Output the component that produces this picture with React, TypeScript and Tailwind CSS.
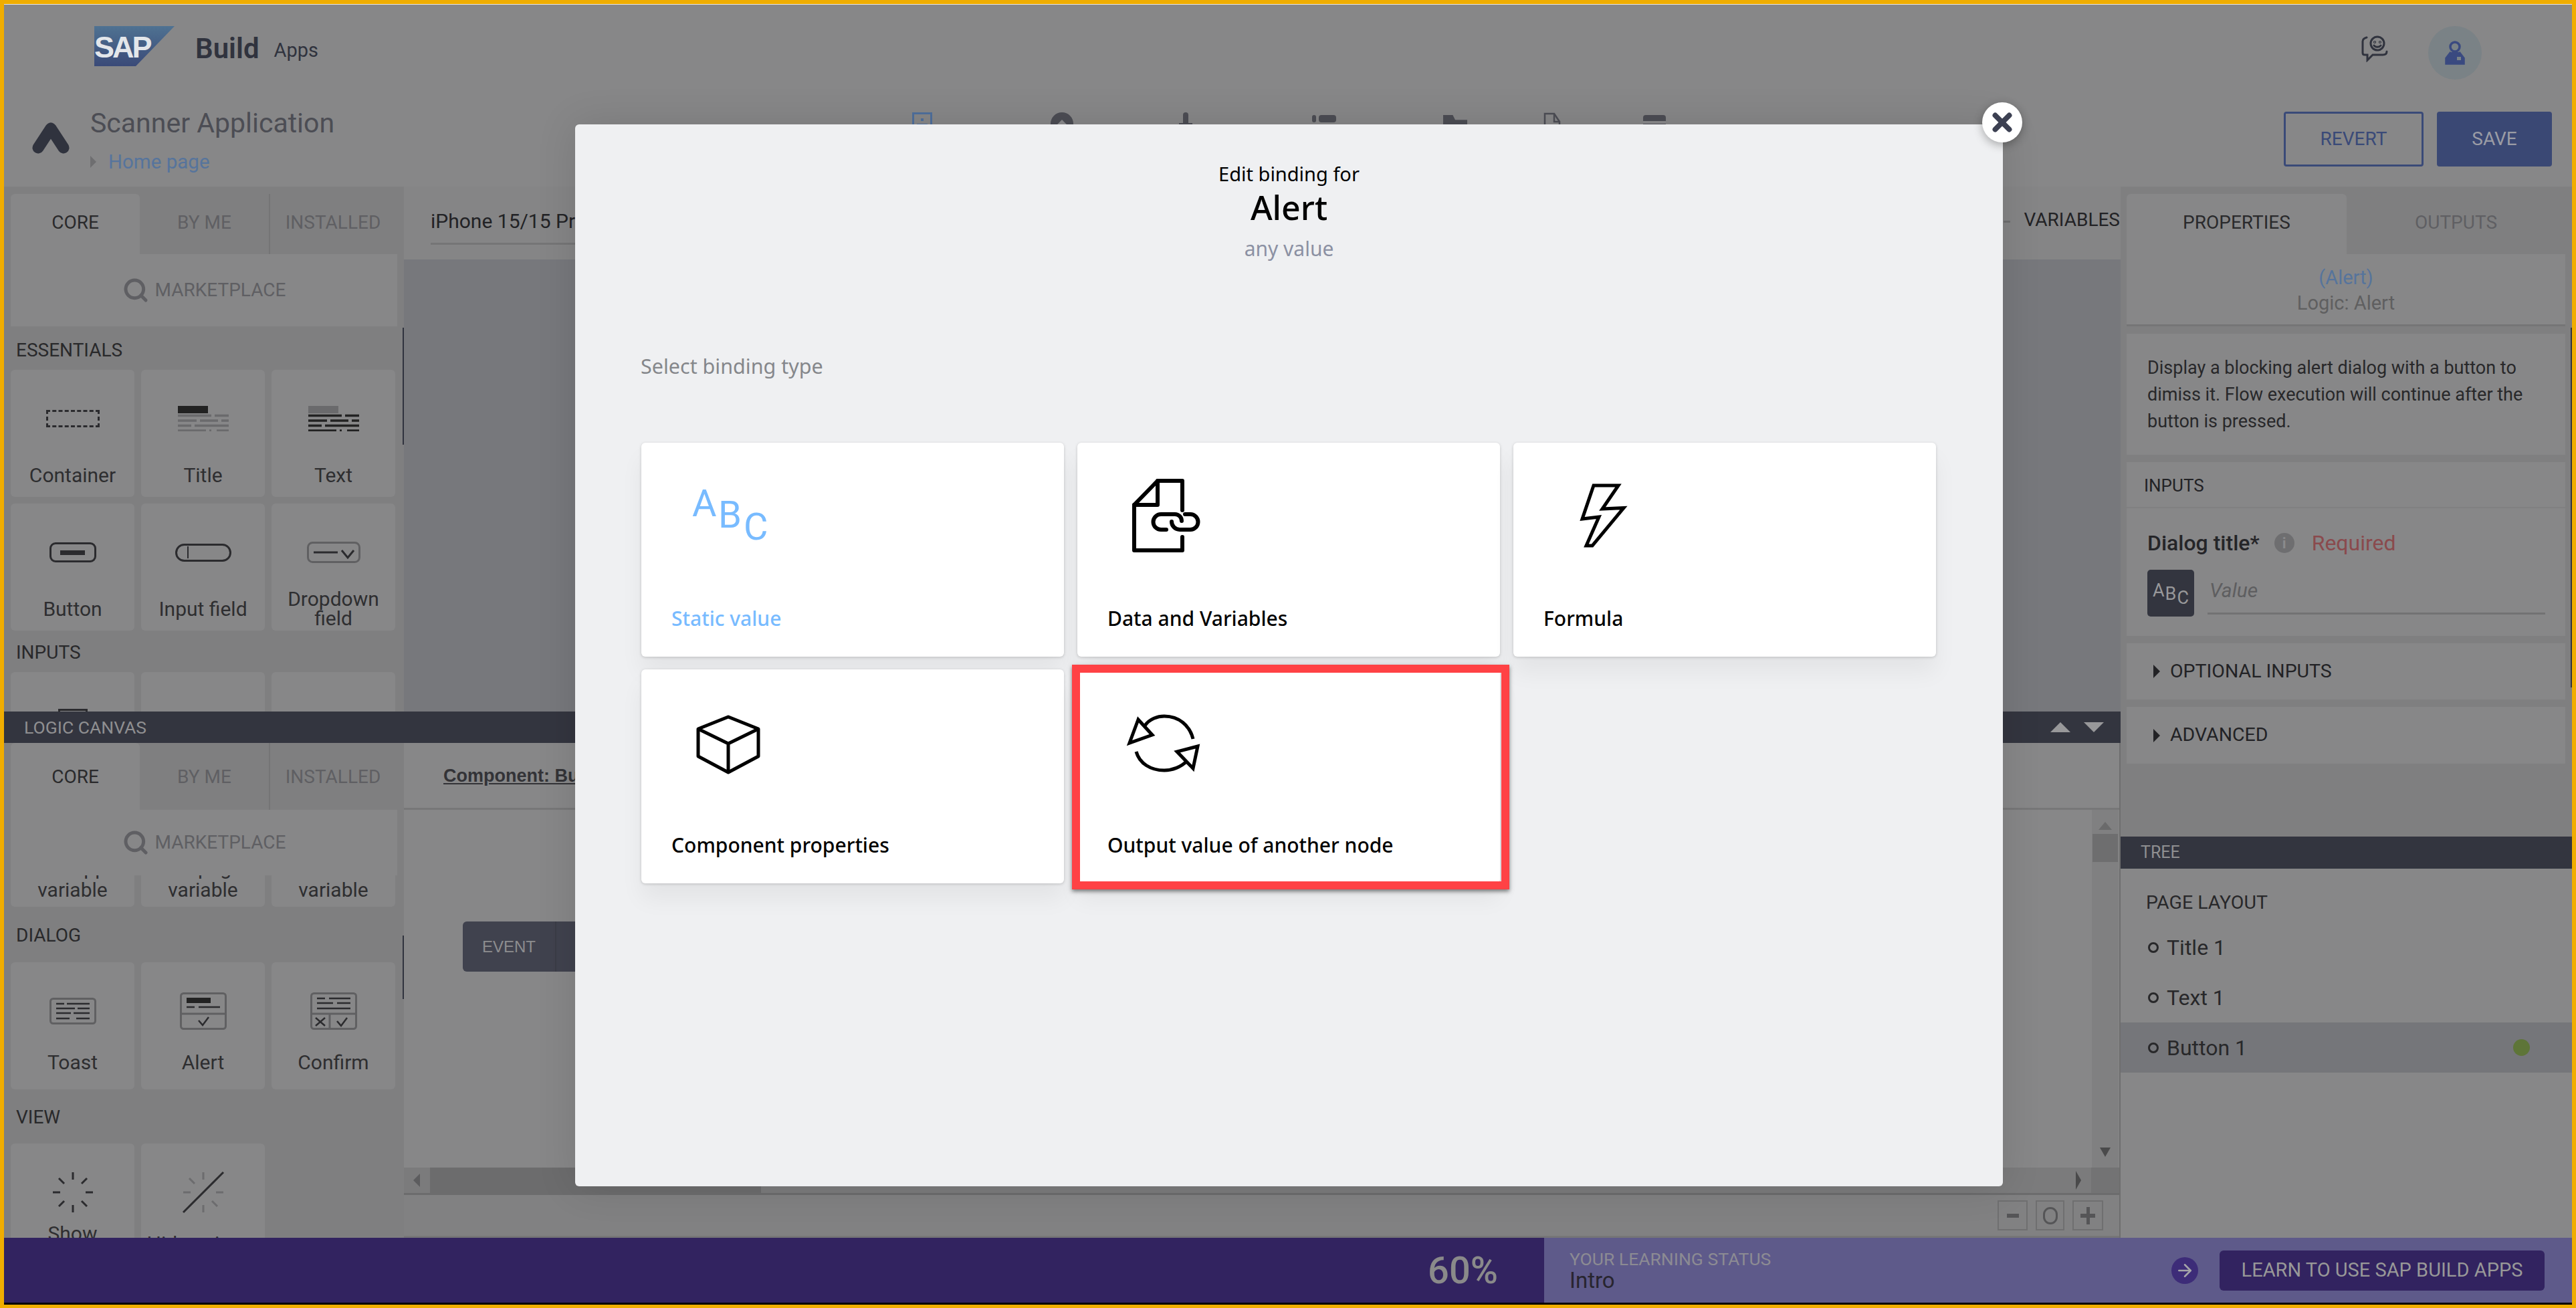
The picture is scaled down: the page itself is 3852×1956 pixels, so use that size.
import React from "react";
import { Search, X, ArrowRight } from "lucide-react";

const DocLinkIcon = () => (
  <svg viewBox="0 0 125 125" className="w-[125px] h-[125px]" fill="none" stroke="#000" strokeWidth="6" strokeLinejoin="round" strokeLinecap="round">
    <path d="M87 53V9H50L15 45V113H87V93" />
    <path d="M50 9V45H15" />
    <path d="M63 82H55A11.5 11.5 0 0 1 55 59H76A10 10 0 0 1 86 69" />
    <path d="M71 70A12 12 0 0 0 83 82H99A11.5 11.5 0 0 0 99 59H91" />
  </svg>
);

const BoltIcon = () => (
  <svg viewBox="0 0 125 125" className="w-[125px] h-[125px]" fill="none" stroke="#000" strokeWidth="5" strokeLinejoin="miter">
    <path d="M50 16H87L63 51L95 49.5L48 106H39L58 63L33 66Z" />
  </svg>
);

const CubeIcon = () => (
  <svg viewBox="0 0 125 125" className="w-[125px] h-[125px]" fill="none" stroke="#000" strokeWidth="5" strokeLinejoin="round">
    <path d="M60 23L105 41V82L60 106L15 82V41Z" />
    <path d="M15 41L60 63L105 41M60 63V106" />
  </svg>
);

const CycleIcon = () => (
  <svg viewBox="0 0 125 125" className="w-[125px] h-[125px]" fill="none" stroke="#000" strokeWidth="5" strokeLinejoin="miter">
    <path d="M31 36C38 26 50 22 60 22C82 22 98 36 103 56" />
    <path d="M18 75C23 93 40 103 60 103C72 103 85 98 94 89" />
    <path d="M21 27L8 62L42 50Z" />
    <path d="M110 67L79 75L103 100Z" />
  </svg>
);

const AbcIcon = () => (
  <svg viewBox="0 0 125 125" className="w-[125px] h-[125px]" fill="#78bbff" fontFamily="Roboto, sans-serif" fontWeight="400" fontSize="56">
    <text x="6" y="62">A</text>
    <text x="45" y="79">B</text>
    <text x="83" y="97">C</text>
  </svg>
);

const SapLogo = () => (
  <svg viewBox="0 0 120 60" className="w-[120px] h-[60px]">
    <defs>
      <linearGradient id="sapfill" x1="0" y1="0" x2="0" y2="1">
        <stop offset="0" stopColor="#4f7292" />
        <stop offset="1" stopColor="#3a4a78" />
      </linearGradient>
    </defs>
    <polygon points="0,0 120,0 62,60 0,60" fill="url(#sapfill)" />
    <text x="0" y="47" fill="#e3e6ea" fontFamily="Liberation Sans, sans-serif" fontWeight="700" fontSize="45" letterSpacing="-3">SAP</text>
  </svg>
);

const AppMark = () => (
  <svg viewBox="0 0 56 47" className="w-[56px] h-[47px]" fill="none" stroke="#30333e" strokeWidth="17" strokeLinecap="round">
    <path d="M28 9L9 38M28 9L47 38" />
  </svg>
);

const ChatSmile = () => (
  <svg viewBox="0 0 40 40" className="w-[40px] h-[40px]" fill="none" stroke="#30333e" strokeWidth="3" strokeLinecap="round">
    <path d="M8 3C4 4 2 6 2 9V26C2 28 3 29 5 29H9V37L17 29H32C36 29 38 27 38 24" />
    <circle cx="24" cy="12" r="10" />
    <circle cx="20" cy="10" r="0.6" />
    <circle cx="28" cy="10" r="0.6" />
    <path d="M19 15C21 18 27 18 29 15" />
  </svg>
);

const UserBadge = () => (
  <svg viewBox="0 0 30 36" className="w-[30px] h-[36px]" fill="none" stroke="#3a4a80" strokeWidth="3.5">
    <circle cx="15" cy="9" r="7" />
    <path d="M9 17L2 26V34H28V26L21 17" fill="#3a4a80" />
    <path d="M18 24H24V29H18Z" fill="#7a8286" stroke="none" />
  </svg>
);

// nav icons at the top of the app bar; the modal cuts them off
const NavIcons = () => (
  <div className="flex items-start pt-[22px] ml-[829px] text-[#4c4d54]">
    <div className="w-[30px] h-[40px] border-[3px] border-[#4f6f9c] flex flex-col items-center pt-[6px] gap-[4px]">
      <span className="w-[4px] h-[4px] bg-[#4f6f9c]" />
      <span className="w-[16px] h-[4px] bg-[#4f6f9c]" />
    </div>
    <div className="ml-[177px] w-[34px] h-[44px] rounded-t-full bg-[#4c4d54] flex justify-center pt-[14px]">
      <span className="w-[14px] h-[14px] rotate-45 bg-[#8a8a8c]" />
    </div>
    <div className="ml-[158px] w-[20px] h-[44px] flex flex-col items-center">
      <span className="w-[8px] h-[16px] rounded-t-full bg-[#4c4d54]" />
      <span className="w-[20px] h-[12px] bg-[#4c4d54]" />
      <span className="w-[10px] h-[16px] border-x-[2px] border-[#4c4d54]" />
    </div>
    <div className="ml-[179px] w-[36px] flex flex-col gap-[5px] pt-[4px]">
      <div className="flex gap-[4px]"><span className="w-[6px] h-[11px] rounded bg-[#4c4d54]" /><span className="w-[26px] h-[11px] rounded bg-[#4c4d54]" /></div>
      <div className="flex gap-[4px]"><span className="w-[6px] h-[11px] rounded bg-[#4c4d54]" /><span className="w-[26px] h-[11px] rounded bg-[#4c4d54]" /></div>
    </div>
    <div className="ml-[160px] w-[36px] h-[34px] pt-[4px] flex flex-col gap-[2px]">
      <span className="w-[36px] h-[18px] bg-[#4c4d54] [clip-path:polygon(0_0,40%_0,50%_40%,100%_40%,100%_100%,0_100%)]" />
      <span className="w-[36px] h-[6px] bg-[#4c4d54]" />
    </div>
    <svg viewBox="0 0 26 36" className="ml-[114px] w-[26px] h-[36px]" fill="none" stroke="#4c4d54" strokeWidth="2.5">
      <path d="M2 36V2H16L24 14V36" />
      <path d="M16 2V14H24M8 36L15 20M18 24V36" />
    </svg>
    <div className="ml-[123px] w-[34px] h-[36px] pt-[4px]">
      <div className="h-full rounded-t-[4px] bg-[#4c4d54] flex flex-col gap-[4px] pt-[9px]">
        <span className="h-[4px] bg-[#8a8a8c]" />
        <span className="h-[4px] bg-[#8a8a8c]" />
      </div>
    </div>
  </div>
);

const PanelTabs = ({ heightClass }: { heightClass: string }) => (
  <div className={`flex items-stretch text-[28px] ${heightClass}`}>
    <div className="ml-[10px] w-[193px] bg-[#878788] rounded-t-[6px] flex items-center justify-center text-[#2a2a2c]">CORE</div>
    <div className="w-[193px] flex items-center justify-center text-[#5f5f63]">BY ME</div>
    <div className="w-[190px] border-l-[2px] border-[#757576] flex items-center justify-center text-[#5f5f63]">INSTALLED</div>
  </div>
);

const Marketplace = ({ heightClass }: { heightClass: string }) => (
  <div className={`mx-[10px] bg-[#878788] flex items-center justify-center gap-[9px] text-[28px] text-[#5f5f63] shrink-0 ${heightClass}`}>
    <Search size={40} strokeWidth={3} color="#5f5f63" />
    <span>MARKETPLACE</span>
  </div>
);

const Tile = ({ icon, label, tight }: { icon: React.ReactNode; label: React.ReactNode; tight?: boolean }) => (
  <div className="h-[190px] bg-[#878788] rounded-[6px] pt-[14px] flex flex-col shrink-0">
    <div className="h-[118px] flex items-center justify-center shrink-0">{icon}</div>
    <div className={`h-[50px] flex items-center justify-center text-center text-[30px] leading-[29px] text-[#2e2e30] ${tight ? "-mt-[8px]" : ""}`}>
      {label}
    </div>
  </div>
);

const TextLines = ({ bar, line }: { bar: string; line: string }) => (
  <svg viewBox="0 0 76 38" className="w-[76px] h-[38px]">
    <rect width="45" height="11" fill={bar} />
    <g stroke={line} strokeWidth="3.5">
      <path d="M0 14.5H50M55 14.5H76M0 22H28M33 22H60M65 22H76M0 29.5H20M25 29.5H76M0 37H42M47 37H50M58 37H76" />
    </g>
  </svg>
);

const ContainerIcon = () => (
  <div className="w-[80px] h-[26px] border-[3px] border-dashed border-[#2b2b2e]" />
);

const ButtonIcon = () => (
  <div className="w-[70px] h-[30px] border-[3px] border-[#2b2b2e] rounded-[9px] flex items-center justify-center">
    <span className="w-[37px] h-[7px] bg-[#2b2b2e]" />
  </div>
);

const InputIcon = () => (
  <div className="w-[84px] h-[27px] border-[3px] border-[#2b2b2e] rounded-full flex items-center pl-[15px]">
    <span className="w-[2px] h-[18px] bg-[#2b2b2e]" />
  </div>
);

const DropdownIcon = () => (
  <svg viewBox="0 0 80 32" className="w-[80px] h-[32px]" fill="none">
    <rect x="1.5" y="1.5" width="77" height="29" rx="7" stroke="#606062" strokeWidth="3" />
    <path d="M10 16H46" stroke="#2b2b2e" strokeWidth="3" />
    <path d="M52 13L61 24L70 13" stroke="#2b2b2e" strokeWidth="3" />
  </svg>
);

const ToastIcon = () => (
  <svg viewBox="0 0 70 40" className="w-[70px] h-[40px]" fill="none">
    <rect x="1.5" y="1.5" width="67" height="37" rx="4" stroke="#606062" strokeWidth="3" />
    <path d="M10 9H22M26 9H60M10 16H38M42 16H60M10 23H32M36 23H60M10 31H30M40 31H60" stroke="#2b2b2e" strokeWidth="2.5" />
  </svg>
);

const AlertIcon = () => (
  <svg viewBox="0 0 70 56" className="w-[70px] h-[56px]" fill="none">
    <rect x="1.5" y="1.5" width="67" height="53" rx="4" stroke="#606062" strokeWidth="3" />
    <path d="M2 32H68" stroke="#606062" strokeWidth="3" />
    <rect x="10" y="8" width="36" height="8" fill="#222" />
    <path d="M10 22H22M28 22H60" stroke="#2b2b2e" strokeWidth="2.5" />
    <path d="M28 42L34 49L43 37" stroke="#2b2b2e" strokeWidth="2.5" />
  </svg>
);

const ConfirmIcon = () => (
  <svg viewBox="0 0 70 56" className="w-[70px] h-[56px]" fill="none">
    <rect x="1.5" y="1.5" width="67" height="53" rx="4" stroke="#606062" strokeWidth="3" />
    <path d="M2 32H68M29 32V55" stroke="#606062" strokeWidth="3" />
    <path d="M10 9H22M28 9H60M10 16H34M40 16H60M10 24H60" stroke="#2b2b2e" strokeWidth="2.5" />
    <path d="M8 38L22 50M22 38L8 50" stroke="#2b2b2e" strokeWidth="2.5" />
    <path d="M40 43L46 50L55 38" stroke="#2b2b2e" strokeWidth="2.5" />
  </svg>
);

const SpinnerIcon = ({ off }: { off?: boolean }) => (
  <svg viewBox="0 0 64 64" className="w-[64px] h-[64px]" fill="none">
    <path
      d="M32 2V13M32 51V62M2 32H13M51 32H62M11 11L19 19M45 45L53 53M11 53L19 45M45 19L53 11"
      stroke={off ? "#6c6c6e" : "#2b2b2e"}
      strokeWidth="3"
    />
    {off && <path d="M2 62L62 2" stroke="#2b2b2e" strokeWidth="3" />}
  </svg>
);

const SectionLabel = ({ children, className }: { children: React.ReactNode; className: string }) => (
  <div className={`pl-[18px] text-[28px] leading-[29px] text-[#29292b] flex items-center shrink-0 ${className}`}>{children}</div>
);

const TileGrid = ({ children }: { children: React.ReactNode }) => (
  <div className="grid grid-cols-[185px_185px_185px] gap-x-[10px] gap-y-[10px] pl-[10px] shrink-0">{children}</div>
);

// tile scrolled up under the marketplace strip, only its last line still shows
const CutVariable = ({ first }: { first: string }) => (
  <div className="h-[47px] bg-[#878788] rounded-b-[6px] overflow-hidden flex flex-col justify-end items-center text-[30px] leading-[33px] text-[#2e2e30] pb-[9px]">
    <span className="shrink-0">{first}</span>
    <span className="shrink-0">variable</span>
  </div>
);

const ThinThumb = ({ className }: { className: string }) => (
  <div className={`absolute w-[2px] bg-[#30333e] ${className}`} />
);

const TopLeftPanel = () => (
  <div className="relative w-[598px] h-full bg-[#7f7f80] flex flex-col overflow-hidden shrink-0">
    <div className="h-[11px] shrink-0" />
    <PanelTabs heightClass="h-[90px] shrink-0 [&>div]:pb-[5px]" />
    <Marketplace heightClass="h-[108px]" />
    <SectionLabel className="h-[65px] pt-[6px]">ESSENTIALS</SectionLabel>
    <TileGrid>
      <Tile icon={<ContainerIcon />} label="Container" />
      <Tile icon={<TextLines bar="#222" line="#6a6a6c" />} label="Title" />
      <Tile icon={<TextLines bar="#6a6a6c" line="#222" />} label="Text" />
      <Tile icon={<ButtonIcon />} label="Button" />
      <Tile icon={<InputIcon />} label="Input field" />
      <Tile icon={<DropdownIcon />} label={<span>Dropdown<br />field</span>} />
    </TileGrid>
    <SectionLabel className="h-[62px] pt-[2px]">INPUTS</SectionLabel>
    <TileGrid>
      <Tile icon={<div className="w-[44px] h-[36px] border-[3px] border-[#2b2b2e]" />} label="" />
      <Tile icon={null} label="" />
      <Tile icon={null} label="" />
    </TileGrid>
    <ThinThumb className="right-0 top-[211px] h-[175px]" />
  </div>
);

const BottomLeftPanel = () => (
  <div className="relative w-[598px] h-full bg-[#7f7f80] flex flex-col overflow-hidden shrink-0">
    <PanelTabs heightClass="h-[100px] shrink-0 [&>div]:pt-[2px]" />
    <Marketplace heightClass="h-[98px]" />
    <TileGrid>
      <CutVariable first="Set app" />
      <CutVariable first="Set page" />
      <CutVariable first="Set theme" />
    </TileGrid>
    <SectionLabel className="h-[83px] pt-[2px]">DIALOG</SectionLabel>
    <TileGrid>
      <Tile tight icon={<ToastIcon />} label="Toast" />
      <Tile tight icon={<AlertIcon />} label="Alert" />
      <Tile tight icon={<ConfirmIcon />} label="Confirm" />
    </TileGrid>
    <SectionLabel className="h-[81px] pt-[2px]">VIEW</SectionLabel>
    <TileGrid>
      <Tile tight icon={<SpinnerIcon />} label={<span>Show<br />spinner</span>} />
      <Tile tight icon={<SpinnerIcon off />} label="Hide spinner" />
    </TileGrid>
    <ThinThumb className="right-0 top-[288px] h-[95px]" />
  </div>
);

const Triangle = ({ className }: { className: string }) => <div className={`w-0 h-0 ${className}`} />;

const LogicCanvas = () => (
  <div className="flex-1 min-w-0 flex flex-col border-r-[2px] border-[#6e6e6e] bg-[#878788]">
    <div className="h-[100px] shrink-0 border-b-[3px] border-[#777778] pl-[59px] pt-[2px] flex items-center font-['Liberation_Sans',sans-serif] font-bold text-[27px] text-[#333337] underline">
      Component: Button 1
    </div>
    <div className="flex-1 min-h-0 flex">
      <div className="flex-1 pl-[88px] pt-[167px]">
        <div className="w-[300px] h-[75px] rounded-[6px] bg-[#40424e] flex font-['Liberation_Sans',sans-serif] text-[24px] text-[#8d8d8f]">
          <div className="w-[140px] flex items-center justify-center border-r-[2px] border-[#3a3c47]">EVENT</div>
        </div>
      </div>
      <div className="w-[40px] mr-[1px] bg-[#808081] flex flex-col items-center pt-[18px]">
        <Triangle className="border-x-[10px] border-x-transparent border-b-[12px] border-b-[#6a6a6b]" />
        <div className="w-[38px] h-[42px] mt-[6px] bg-[#6e6e6f]" />
        <div className="flex-1" />
        <Triangle className="mb-[16px] border-x-[8px] border-x-transparent border-t-[14px] border-t-[#4a4a4b]" />
      </div>
    </div>
    <div className="h-[41px] shrink-0 flex items-center bg-[#7b7b7c] border-b-[3px] border-[#6c6c6d]">
      <Triangle className="ml-[14px] border-y-[10px] border-y-transparent border-r-[10px] border-r-[#5c5c5e]" />
      <div className="ml-[15px] w-[495px] h-full bg-[#6c6c6d]" />
      <div className="flex-1" />
      <Triangle className="mr-[3px] border-y-[14px] border-y-transparent border-l-[8px] border-l-[#4a4a4b]" />
      <div className="ml-[12px] w-[42px] h-full bg-[#737374]" />
    </div>
    <div className="flex-1 max-h-[64px] min-h-[64px] shrink-0 bg-[#818182] border-b-[3px] border-[#767677] flex items-center justify-end gap-[12px] pr-[24px]">
      <div className="w-[45px] h-[45px] border-[2px] border-[#6f6f70] flex items-center justify-center">
        <span className="w-[18px] h-[6px] bg-[#555557]" />
      </div>
      <div className="w-[43px] h-[45px] border-[2px] border-[#6f6f70] flex items-center justify-center">
        <span className="w-[22px] h-[26px] rounded-full border-[3px] border-[#555557]" />
      </div>
      <div className="relative w-[46px] h-[45px] border-[2px] border-[#6f6f70] flex items-center justify-center">
        <span className="w-[22px] h-[6px] bg-[#555557]" />
        <span className="absolute w-[5px] h-[26px] bg-[#555557]" />
      </div>
    </div>
  </div>
);

const EditorCanvas = () => (
  <div className="flex-1 min-w-0 flex flex-col">
    <div className="h-[109px] shrink-0 bg-[#858586] flex items-start pl-[40px] pt-[29px]">
      <div className="w-[800px] border-b-[3px] border-[#757576] h-[58px] text-[30px] text-[#222225]">iPhone 15/15 Pro</div>
      <div className="flex-1" />
      <span className="w-[10px] h-[3px] bg-[#6f6f70] mt-[22px] mr-[20px]" />
      <span className="text-[28px] text-[#222225] pr-[1px]">VARIABLES</span>
    </div>
    <div className="flex-1 bg-[#77787c]" />
  </div>
);

const PropertiesPanel = () => (
  <div className="relative flex-1 min-h-0 bg-[#7f7f80] overflow-hidden flex flex-col pl-[9px] pr-[10px]">
    <div className="h-[11px] shrink-0" />
    <div className="flex h-[90px] shrink-0 text-[28px] [&>div]:pb-[5px]">
      <div className="w-[329px] bg-[#878788] rounded-t-[6px] flex items-center justify-center text-[#2a2a2c]">PROPERTIES</div>
      <div className="flex-1 flex items-center justify-center text-[#5f5f63]">OUTPUTS</div>
    </div>
    <div className="h-[108px] shrink-0 bg-[#878788] border-b-[3px] border-[#757576] flex flex-col items-center pt-[16px] text-[29px] leading-[38px]">
      <span className="text-[#56749c]">(Alert)</span>
      <span className="text-[#5f5f60]">Logic: Alert</span>
    </div>
    <div className="mt-[11px] bg-[#878788] pl-[31px] pr-[20px] pt-[31px] pb-[30px] text-[27px] leading-[40px] text-[#28282a]">
      Display a blocking alert dialog with a button to dimiss it. Flow execution will continue after the button is pressed.
    </div>
    <div className="mt-[11px] h-[69px] shrink-0 bg-[#878788] border-b-[2px] border-[#808081] pl-[26px] pt-[4px] flex items-center text-[26px] text-[#222225]">INPUTS</div>
    <div className="h-[191px] shrink-0 bg-[#878788] pl-[31px] pr-[30px]">
      <div className="flex items-center h-[92px] pt-[12px] text-[32px]">
        <span className="font-medium text-[#252528]">Dialog title*</span>
        <span className="ml-[22px] w-[30px] h-[30px] rounded-full bg-[#6e6e70] text-[#8a8a8c] text-[22px] font-bold flex items-center justify-center">i</span>
        <span className="ml-[26px] text-[#8a4a4d]">Required</span>
      </div>
      <div className="flex">
        <div className="w-[70px] h-[70px] rounded-[5px] bg-[#33353f] text-[#98989a] text-[27px] relative shrink-0 flex items-start justify-center pt-[11px] gap-[1px]">
          <span>A</span><span className="mt-[5px]">B</span><span className="mt-[11px]">C</span>
        </div>
        <div className="ml-[20px] flex-1 h-[67px] border-b-[3px] border-[#727273] pl-[3px] pt-[8px] text-[30px] italic text-[#5e5e60]">Value</div>
      </div>
    </div>
    <div className="mt-[11px] h-[84px] shrink-0 bg-[#878788] pl-[40px] flex items-center gap-[15px] text-[28.5px] text-[#222225]">
      <Triangle className="border-y-[10px] border-y-transparent border-l-[10px] border-l-[#222225]" />
      OPTIONAL INPUTS
    </div>
    <div className="mt-[11px] h-[85px] shrink-0 bg-[#878788] pl-[40px] flex items-center gap-[15px] text-[28.5px] text-[#222225]">
      <Triangle className="border-y-[10px] border-y-transparent border-l-[10px] border-l-[#222225]" />
      ADVANCED
    </div>
    <div className="absolute right-0 top-[211px] h-[538px] w-[2px] bg-[#30333e]" />
  </div>
);

const TreeRow = ({ label, active }: { label: string; active?: boolean }) => (
  <div className={`h-[75px] flex items-center pl-[41px] pr-[63px] text-[32px] text-[#28282a] ${active ? "bg-[#75767a]" : ""}`}>
    <span className="w-[16px] h-[16px] rounded-full border-[3px] border-[#28282a]" />
    <span className="ml-[12px]">{label}</span>
    {active && <span className="ml-auto w-[25px] h-[25px] rounded-full bg-[#5e7538]" />}
  </div>
);

const TreePanel = () => (
  <div className="h-[600px] shrink-0 bg-[#878788] flex flex-col">
    <div className="h-[48px] shrink-0 bg-[#33353f] pl-[30px] flex items-center text-[25px] text-[#8f8f91]">TREE</div>
    <div className="h-[80px] shrink-0 pl-[38px] pt-[22px] text-[28.5px] leading-[58px] text-[#28282a]">PAGE LAYOUT</div>
    <TreeRow label="Title 1" />
    <TreeRow label="Text 1" />
    <TreeRow label="Button 1" active />
  </div>
);

const BindingCard = ({ icon, label, labelClass = "text-black", children }: { icon: React.ReactNode; label: string; labelClass?: string; children?: React.ReactNode }) => (
  <div className="relative h-[320px] bg-white rounded-[6px] shadow-[0_24px_34px_rgba(0,0,0,0.05),0_1px_4px_rgba(0,0,0,0.18)] pt-[48px] pl-[45px]">
    <div className="ml-[25px] h-[125px]">{icon}</div>
    <div className={`mt-[70px] text-[30px] leading-[40px] font-medium ${labelClass}`}>{label}</div>
    {children}
  </div>
);

const BindingModal = () => (
  <div className="absolute inset-0 font-['Noto_Sans',sans-serif]">
    <div className="relative ml-[854px] mt-[180px] w-[2135px] h-[1588px] bg-[#eff0f2] rounded-[6px] shadow-[0_0_60px_rgba(0,0,0,0.12)] flex flex-col">
      <div className="absolute -top-[33px] -right-[29px] w-[60px] h-[60px] rounded-full bg-white shadow-[0_4px_14px_rgba(0,0,0,0.3)] flex items-center justify-center">
        <X size={42} strokeWidth={4.5} color="#3c4052" />
      </div>
      <div className="pt-[54px] flex flex-col items-center">
        <span className="text-[29px] leading-[40px] text-black">Edit binding for</span>
        <span className="text-[50px] leading-[60px] font-medium text-black">Alert</span>
        <span className="mt-[12px] text-[30px] leading-[40px] text-[#8b90a3]">any value</span>
      </div>
      <div className="mt-[135px] pl-[98px] text-[30.5px] leading-[40px] text-[#85878b]">Select binding type</div>
      <div className="mt-[95px] pl-[99px] grid grid-cols-[632px_632px_632px] gap-x-[20px] gap-y-[19px]">
        <BindingCard icon={<AbcIcon />} label="Static value" labelClass="text-[#78bbff]" />
        <BindingCard icon={<DocLinkIcon />} label="Data and Variables" />
        <BindingCard icon={<BoltIcon />} label="Formula" />
        <BindingCard icon={<CubeIcon />} label="Component properties" />
        <BindingCard icon={<CycleIcon />} label="Output value of another node">
          <div className="absolute -top-[7px] -left-[8px] -right-[14px] -bottom-[9px] border-[12px] border-[#ff4245] shadow-[0_3px_6px_rgba(0,0,0,0.5)]" />
        </BindingCard>
      </div>
    </div>
  </div>
);

export default function App() {
  return (
    <div className="relative w-screen h-screen overflow-hidden flex flex-col bg-[#878788] border-[#f0ad00] border-t-[6px] border-x-[6px] border-b-[5px] font-['Roboto',sans-serif]">
      {/* top bar */}
      <div className="h-[140px] shrink-0 border-t-[1px] border-[#e6e6e6] flex items-start pt-[32px] pl-[135px] pr-[135px]">
        <SapLogo />
        <span className="ml-[31px] mt-[10px] text-[42px] leading-[48px] font-semibold text-[#30333e]">Build</span>
        <span className="ml-[22px] mt-[12px] text-[29px] leading-[48px] text-[#30333e]">Apps</span>
        <div className="ml-auto mt-[14px]"><ChatSmile /></div>
        <div className="ml-[60px] w-[80px] h-[80px] rounded-full bg-[#7a8286] flex items-center justify-center">
          <UserBadge />
        </div>
      </div>

      {/* app bar */}
      <div className="h-[133px] shrink-0 flex items-start">
        <div className="ml-[42px] mt-[37px]"><AppMark /></div>
        <div className="ml-[31px] mt-[16px] w-[400px] shrink-0">
          <div className="text-[41px] leading-[44px] text-[#4c4d54]">Scanner Application</div>
          <div className="mt-[18px] flex items-center text-[29.5px] leading-[36px] text-[#56749c]">
            <Triangle className="border-y-[9px] border-y-transparent border-l-[9px] border-l-[#6e6e70] mr-[18px]" />
            Home page
          </div>
        </div>
        <NavIcons />
        <div className="ml-auto mt-[21px] mr-[30px] flex gap-[20px] text-[28px]">
          <div className="w-[209px] h-[82px] border-[3px] border-[#3a4a78] rounded-[4px] flex items-center justify-center text-[#3a4a78]">REVERT</div>
          <div className="w-[172px] h-[82px] bg-[#3a4874] rounded-[4px] flex items-center justify-center text-[#9a9ca5]">SAVE</div>
        </div>
      </div>

      {/* workspace */}
      <div className="flex-1 min-h-0 flex">
        <div className="w-[3165px] shrink-0 flex flex-col">
          <div className="h-[785px] shrink-0 flex">
            <TopLeftPanel />
            <EditorCanvas />
          </div>
          <div className="h-[47px] shrink-0 bg-[#33353f] pl-[30px] pr-[25px] flex items-center text-[26.5px] text-[#8f8f91]">
            LOGIC CANVAS
            <div className="ml-auto flex gap-[20px]">
              <Triangle className="border-x-[15px] border-x-transparent border-b-[15px] border-b-[#98989a]" />
              <Triangle className="border-x-[15px] border-x-transparent border-t-[15px] border-t-[#98989a]" />
            </div>
          </div>
          <div className="flex-1 min-h-0 flex">
            <BottomLeftPanel />
            <LogicCanvas />
          </div>
        </div>
        <div className="flex-1 min-w-0 flex flex-col">
          <PropertiesPanel />
          <TreePanel />
        </div>
      </div>

      {/* learning bar */}
      <div className="h-[100px] shrink-0 flex border-b-[3px] border-black">
        <div className="w-[2303px] shrink-0 bg-[#322360] flex items-center justify-end pr-[69px] text-[56px] font-medium text-[#8a8a8a]">60%</div>
        <div className="flex-1 bg-[#5e5a8a] flex items-center pl-[38px] pr-[41px]">
          <div className="flex flex-col">
            <span className="text-[26.5px] leading-[30px] text-[#8c8b93]">YOUR LEARNING STATUS</span>
            <span className="text-[33px] leading-[34px] text-[#28252f]">Intro</span>
          </div>
          <div className="ml-auto w-[40px] h-[40px] rounded-full bg-[#3d2c78] flex items-center justify-center">
            <ArrowRight size={30} color="#a5a5a8" />
          </div>
          <div className="ml-[32px] w-[486px] h-[60px] rounded-[6px] bg-[#322360] flex items-center justify-center text-[29px] text-[#989898]">
            LEARN TO USE SAP BUILD APPS
          </div>
        </div>
      </div>

      <BindingModal />
    </div>
  );
}
